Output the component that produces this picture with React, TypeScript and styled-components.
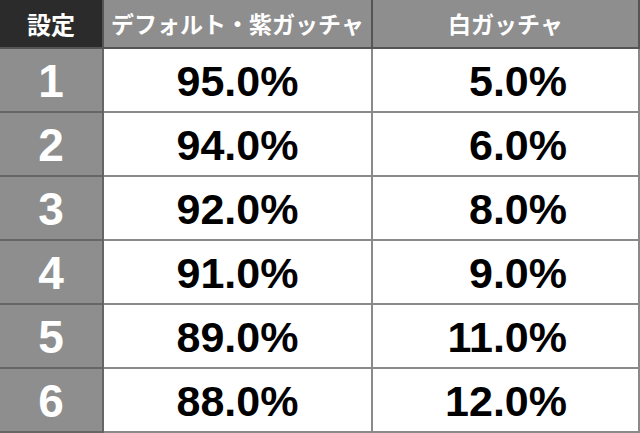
import React from "react";
import styled, { createGlobalStyle } from "styled-components";

const GlobalStyle = createGlobalStyle`
  html, body {
    margin: 0;
    padding: 0;
    background: #ffffff;
  }
  body {
    font-family: "Liberation Sans", "Noto Sans CJK JP", sans-serif;
  }
`;

const rows = [
  { setting: "1", normal: "95.0%", white: "5.0%" },
  { setting: "2", normal: "94.0%", white: "6.0%" },
  { setting: "3", normal: "92.0%", white: "8.0%" },
  { setting: "4", normal: "91.0%", white: "9.0%" },
  { setting: "5", normal: "89.0%", white: "11.0%" },
  { setting: "6", normal: "88.0%", white: "12.0%" },
];

const App = () => {
  return (
    <>
      <GlobalStyle />
      <RateTable>
        <colgroup>
          <col style={{ width: 103 }} />
          <col style={{ width: 269 }} />
          <col style={{ width: 267 }} />
        </colgroup>
        <thead>
          <HeadRow>
            <HeadCell dark>設定</HeadCell>
            <HeadCell>デフォルト・紫ガッチャ</HeadCell>
            <HeadCell>白ガッチャ</HeadCell>
          </HeadRow>
        </thead>
        <tbody>
          {rows.map((row) => (
            <BodyRow key={row.setting}>
              <SettingCell>{row.setting}</SettingCell>
              <RateCell>{row.normal}</RateCell>
              <RateCell alignRight>{row.white}</RateCell>
            </BodyRow>
          ))}
        </tbody>
      </RateTable>
    </>
  );
};

const RateTable = styled.table`
  width: 639px;
  border-collapse: collapse;
  table-layout: fixed;
`;

const HeadRow = styled.tr`
  height: 48px;
`;

const BodyRow = styled.tr`
  height: 64px;
`;

const HeadCell = styled.th<{ dark?: boolean }>`
  padding: 0;
  background: ${(p) => (p.dark ? "#2b2b2b" : "#8e8e8e")};
  color: #ffffff;
  font-family: "Noto Sans CJK JP", sans-serif;
  font-weight: 700;
  font-size: ${(p) => (p.dark ? "24px" : "23px")};
  text-align: center;
  vertical-align: middle;
  border: 2px solid #555555;
  border-top: none;
  border-left: ${(p) => (p.dark ? "none" : "2px solid #555555")};
  line-height: 1;
`;

const SettingCell = styled.td`
  padding: 2px 0 0;
  background: #8e8e8e;
  color: #ffffff;
  font-family: "Liberation Sans", Arial, sans-serif;
  font-weight: 700;
  font-size: 46px;
  text-align: center;
  vertical-align: middle;
  border: 2px solid #666666;
  border-left: none;
  line-height: 1;
`;

const RateCell = styled.td<{ alignRight?: boolean }>`
  padding: 3px ${(p) => (p.alignRight ? "71px" : "0")} 0 0;
  background: #ffffff;
  color: #000000;
  font-family: "Liberation Sans", Arial, sans-serif;
  font-weight: 700;
  font-size: 43px;
  text-align: ${(p) => (p.alignRight ? "right" : "center")};
  vertical-align: middle;
  border: 2px solid #8a8a8a;
  line-height: 1;
`;

export default App;
